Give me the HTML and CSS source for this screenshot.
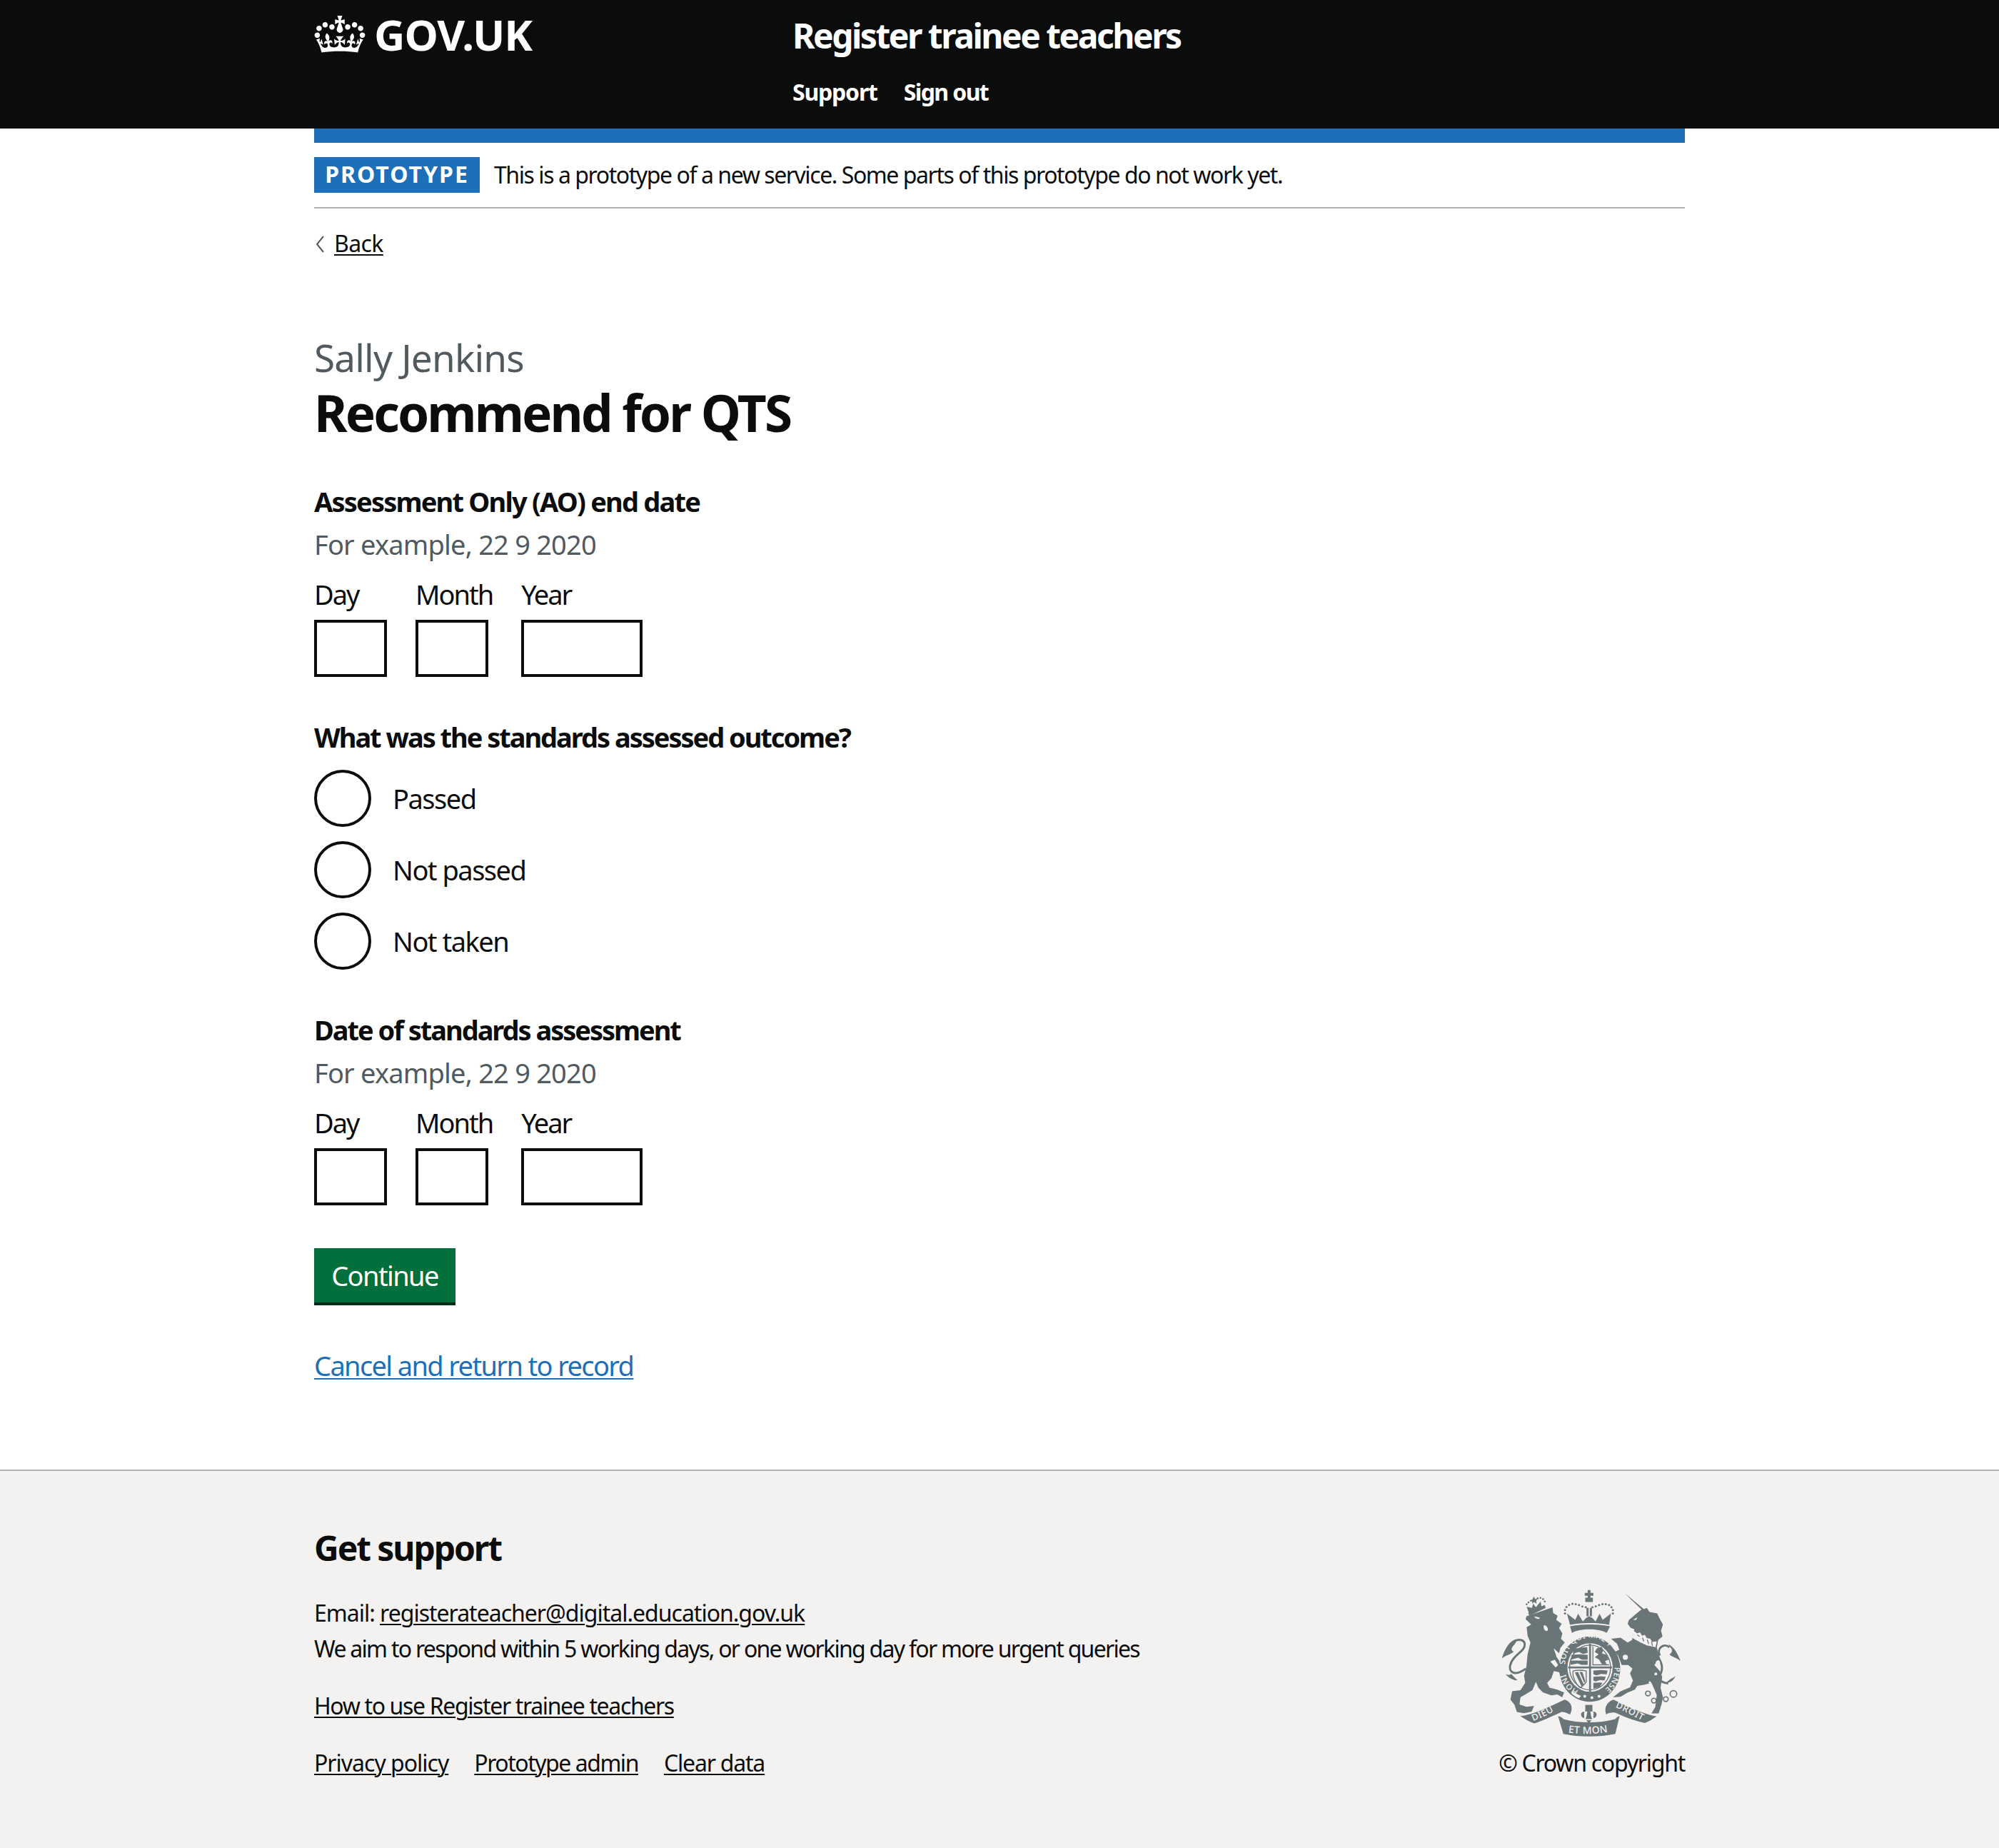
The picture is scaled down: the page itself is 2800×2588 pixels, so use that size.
FILE: index.html
```html
<!DOCTYPE html>
<html lang="en">
<head>
<meta charset="utf-8">
<title>Recommend for QTS - Register trainee teachers</title>
<link rel="stylesheet" href="styles.css">
</head>
<body>
<header class="header">
  <div class="container header-inner">
    <a class="logo" href="#">
      <svg class="crown" viewBox="0 0 132 97" aria-hidden="true"><path fill="currentColor" fill-rule="evenodd" d="M25 30.2c3.5 1.5 7.7-.2 9.1-3.7 1.5-3.6-.2-7.8-3.9-9.2-3.6-1.4-7.6.3-9.1 3.9-1.4 3.5.3 7.5 3.9 9zM9 39.5c3.6 1.5 7.8-.2 9.2-3.7 1.5-3.6-.2-7.8-3.9-9.1-3.6-1.5-7.6.2-9.1 3.8-1.4 3.5.3 7.5 3.8 9zM4.4 57.2c3.5 1.5 7.7-.2 9.1-3.8 1.5-3.6-.2-7.7-3.9-9.1-3.5-1.5-7.6.3-9.1 3.8-1.4 3.5.3 7.6 3.9 9.1zm38.3-21.4c3.5 1.5 7.7-.2 9.1-3.8 1.5-3.6-.2-7.7-3.9-9.1-3.6-1.5-7.6.3-9.1 3.8-1.3 3.6.4 7.7 3.9 9.1zm64.4-5.6c-3.6 1.5-7.8-.2-9.1-3.7-1.5-3.6.2-7.8 3.8-9.2 3.6-1.4 7.7.3 9.2 3.9 1.3 3.5-.4 7.5-3.9 9zm15.9 9.3c-3.6 1.5-7.7-.2-9.1-3.7-1.5-3.6.2-7.8 3.7-9.1 3.6-1.5 7.7.2 9.2 3.8 1.5 3.5-.3 7.5-3.8 9zm4.7 17.7c-3.6 1.5-7.8-.2-9.2-3.8-1.5-3.6.2-7.7 3.9-9.1 3.6-1.5 7.7.3 9.2 3.8 1.3 3.5-.4 7.6-3.9 9.1zM89.3 35.8c-3.6 1.5-7.8-.2-9.2-3.8-1.4-3.6.2-7.7 3.9-9.1 3.6-1.5 7.7.3 9.2 3.8 1.4 3.6-.3 7.7-3.9 9.1zM69.7 17.7l8.9 4.7V9.3l-8.9 2.8c-.2-.3-.5-.6-.9-.9L72.4 0H59.6l3.6 11.2c-.3.3-.6.5-.9.9l-8.8-2.8v13.1l8.8-4.7c.3.3.6.7.9.9l-5 15.4v.1c-.2.8-.4 1.6-.4 2.4 0 4.1 3.1 7.5 7 8.1h.2c.3 0 .7.1 1 .1.4 0 .7 0 1-.1h.2c4-.6 7.1-4.1 7.1-8.1 0-.8-.1-1.7-.4-2.4V34l-5.1-15.4c.4-.2.7-.6 1-.9zM66 92.8c16.9 0 32.8 1.1 47.1 3.2 4-16.9 8.9-26.7 14-33.5l-9.6-3.4c1 4.9 1.1 7.2 0 10.2-1.5-1.4-3-4.3-4.2-8.7L108.6 76c2.8-2 5-3.2 7.5-3.3-4.4 9.4-10 11.9-13.6 11.2-4.3-.8-6.3-4.6-5.6-7.9 1-4.7 5.7-5.9 8-.5 4.3-8.7-3-11.4-7.6-8.8 7.1-7.2 7.9-13.5 2.1-21.1-8 6.1-8.1 12.3-4.5 20.8-4.7-5.4-12.1-2.5-9.5 6.2 3.4-5.2 7.9-2 7.2 3.1-.6 4.3-6.4 7.8-13.5 7.2-10.3-.9-10.9-8-11.2-13.8 2.5-.5 7.1 1.8 11 7.3L80.2 60c-4.1 4.4-8 5.3-12.3 5.4 1.4-4.4 8-11.6 8-11.6H55.5s6.4 7.2 7.9 11.6c-4.2-.1-8-1-12.3-5.4l1.4 16.4c3.9-5.5 8.5-7.7 10.9-7.3-.3 5.8-.9 12.8-11.1 13.8-7.2.6-12.9-2.9-13.5-7.2-.7-5 3.8-8.3 7.1-3.1 2.7-8.7-4.6-11.6-9.4-6.2 3.7-8.5 3.6-14.7-4.6-20.8-5.8 7.6-5 13.9 2.2 21.1-4.7-2.6-11.9.1-7.7 8.8 2.3-5.5 7.1-4.2 8.1.5.7 3.3-1.3 7.1-5.7 7.9-3.5.7-9-1.8-13.5-11.2 2.5.1 4.7 1.3 7.5 3.3l-4.7-15.4c-1.2 4.4-2.7 7.2-4.3 8.7-1.1-3-.9-5.3 0-10.2l-9.5 3.4c5 6.9 9.9 16.7 14 33.5 14.8-2.1 30.8-3.2 47.7-3.2z"/></svg>
      <span class="logotype">GOV.UK</span>
    </a>
    <div class="service">
      <a class="service-name" href="#">Register trainee teachers</a>
      <nav class="service-nav">
        <a href="#">Support</a>
        <a class="nav-signout" href="#">Sign out</a>
      </nav>
    </div>
  </div>
</header>

<div class="container">
  <div class="bluebar"></div>
  <div class="phase">
    <strong class="tag">PROTOTYPE</strong>
    <span class="phase-text">This is a prototype of a new service. Some parts of this prototype do not work yet.</span>
  </div>
  <a class="back" href="#"><svg class="back-chev" viewBox="0 0 16 26" aria-hidden="true"><path d="M13 2 L4 13 L13 24" fill="none" stroke="#505a5f" stroke-width="2"/></svg><span class="back-label">Back</span></a>

  <main class="main">
    <span class="caption">Sally Jenkins</span>
    <h1 class="title">Recommend for QTS</h1>

    <fieldset class="group group-first">
      <legend class="legend legend-a">Assessment Only (AO) end date</legend>
      <div class="hint">For example, 22 9 2020</div>
      <div class="date">
        <div class="date-item"><label class="date-label">Day</label><input class="input input-2" type="text"></div>
        <div class="date-item"><label class="date-label">Month</label><input class="input input-2" type="text"></div>
        <div class="date-item"><label class="date-label">Year</label><input class="input input-4" type="text"></div>
      </div>
    </fieldset>

    <fieldset class="group group-next">
      <legend class="legend legend-b">What was the standards assessed outcome?</legend>
      <div class="radios">
        <label class="radio"><input class="radio-input" type="radio" name="o"><span class="radio-label">Passed</span></label>
        <label class="radio"><input class="radio-input" type="radio" name="o"><span class="radio-label">Not passed</span></label>
        <label class="radio"><input class="radio-input" type="radio" name="o"><span class="radio-label">Not taken</span></label>
      </div>
    </fieldset>

    <fieldset class="group group-next">
      <legend class="legend legend-b">Date of standards assessment</legend>
      <div class="hint">For example, 22 9 2020</div>
      <div class="date">
        <div class="date-item"><label class="date-label">Day</label><input class="input input-2" type="text"></div>
        <div class="date-item"><label class="date-label">Month</label><input class="input input-2" type="text"></div>
        <div class="date-item"><label class="date-label">Year</label><input class="input input-4" type="text"></div>
      </div>
    </fieldset>

    <button class="button" type="button">Continue</button>
    <p class="cancel"><a href="#">Cancel and return to record</a></p>
  </main>
</div>

<footer class="footer">
  <div class="container footer-inner">
    <div class="footer-meta">
      <h2 class="footer-title">Get support</h2>
      <p class="footer-line footer-email">Email: <a href="#">registerateacher@digital.education.gov.uk</a></p>
      <p class="footer-line footer-aim">We aim to respond within 5 working days, or one working day for more urgent queries</p>
      <p class="footer-how"><a href="#">How to use Register trainee teachers</a></p>
      <ul class="footer-links">
        <li class="fl-privacy"><a href="#">Privacy policy</a></li>
        <li class="fl-admin"><a href="#">Prototype admin</a></li>
        <li class="fl-clear"><a href="#">Clear data</a></li>
      </ul>
    </div>
    <div class="footer-copy">
      <svg class="arms" viewBox="70 75 755 620" aria-hidden="true">
        <defs>
          <path id="garterTop" d="M338 392 A104 108 0 0 1 546 384"/>
          <path id="garterRight" d="M544 404 A102 108 0 0 1 500 500"/>
          <path id="garterLeft" d="M394 502 A104 108 0 0 1 339 432"/>
          <path id="ribLeft" d="M203 630 C245 614 285 594 318 572"/>
          <path id="ribMid" d="M350 678 C400 686 470 686 528 674"/>
          <path id="ribRight" d="M548 572 C590 590 630 612 668 632"/>
        </defs>
        <g class="arms-ink">
          <!-- lion -->
          <path d="M175 190 L210 178 L250 165 L285 153 L287 176 L306 188 L300 205 L323 222 L312 240 L326 262 L320 285 L336 300 L318 322 L312 345 L290 325 L302 362 L325 395 L338 425 L320 440 L312 425 L290 420 L280 450 L262 470 L272 490 L305 498 L333 510 L325 530 L305 518 L280 522 L245 510 L225 490 L215 465 L200 500 L150 530 L146 560 L175 570 L207 566 L197 590 L165 597 L135 592 L125 562 L108 540 L115 505 L150 500 L170 470 L165 440 L175 400 L180 350 L192 300 L180 272 L176 236 L195 225 L172 203 Z"/>
          <path class="arms-line" d="M172 410 C125 445 92 425 112 382 C130 345 168 338 168 308 C168 288 140 284 125 295"/>
          <path d="M132 287 C105 292 85 325 72 367 C92 352 112 350 122 338 C112 335 108 325 122 312 C128 305 135 296 132 287Z"/>
          <path d="M112 432 C104 438 96 436 88 433 C100 448 122 462 138 458 C128 450 120 442 112 432Z"/>
          <!-- lion crown -->
          <path d="M182 176 L252 142 L256 155 L188 188 Z"/>
          <path d="M184 172 L176 150 L198 155 L203 138 L215 152 L235 128 L238 148 L250 145 L248 156 L190 180 Z"/>
          <path d="M200 120 L206 107 L212 118 L222 116 L216 126 L218 138 L208 130 L199 136 L199 126 L190 124 Z"/>
          <circle cx="176" cy="140" r="4"/><circle cx="184" cy="132" r="4"/><circle cx="194" cy="125" r="4"/><circle cx="222" cy="115" r="4"/><circle cx="234" cy="113" r="4"/><circle cx="245" cy="118" r="4"/><circle cx="252" cy="128" r="4"/>
          <!-- unicorn -->
          <path d="M588 94 L668 160 L680 155 L692 172 L724 178 L734 200 L748 225 L740 250 L746 275 L728 290 L722 322 L735 365 L712 395 L735 420 L745 445 L738 490 L748 530 L742 560 L730 598 L700 598 L716 570 L722 520 L700 470 L668 478 L640 482 L630 498 L600 510 L570 528 L538 530 L570 505 L610 488 L622 460 L610 430 L620 410 L602 395 L575 395 L560 355 L545 340 L565 330 L555 305 L530 285 L570 280 L600 300 L618 290 L628 245 L612 238 L600 222 L605 206 L640 176 L658 162 Z"/>
          <path class="arms-line" d="M728 362 C742 385 750 405 738 432 C726 455 738 468 770 472"/>
          <path class="arms-line" d="M735 355 C720 325 752 300 775 320"/>
          <path d="M770 308 C795 318 808 345 822 378 C802 362 786 362 775 350 C786 344 790 332 780 322Z"/>
          <path d="M782 452 C790 450 794 445 800 442 C792 462 775 470 760 470 Z"/>
          <!-- royal crown -->
          <path d="M358 232 C400 222 480 222 526 232 L512 260 C478 240 400 240 366 260 Z"/>
          <path d="M358 226 L345 178 L380 205 L392 180 L412 212 L425 198 L438 190 L452 198 L465 212 L482 180 L495 205 L530 178 L522 226 C480 216 400 216 358 226Z"/>
          <path d="M427 155 H436 V190 H427Z M441 155 H450 V190 H441Z"/>
          <path d="M420 92 H432 V80 H444 V92 H456 V104 H444 V112 H454 V130 H422 V112 H432 V104 H420Z"/>
          <circle cx="337" cy="178" r="4.5"/><circle cx="337" cy="164" r="4.5"/><circle cx="343" cy="151" r="4.5"/><circle cx="354" cy="142" r="4.5"/><circle cx="368" cy="138" r="4.5"/><circle cx="382" cy="139" r="4.5"/><circle cx="396" cy="143" r="4.5"/><circle cx="410" cy="149" r="4.5"/><circle cx="424" cy="152" r="4.5"/><circle cx="452" cy="152" r="4.5"/><circle cx="466" cy="148" r="4.5"/><circle cx="480" cy="143" r="4.5"/><circle cx="494" cy="139" r="4.5"/><circle cx="508" cy="139" r="4.5"/><circle cx="522" cy="143" r="4.5"/><circle cx="532" cy="152" r="4.5"/><circle cx="538" cy="164" r="4.5"/><circle cx="538" cy="178" r="4.5"/>
          <!-- garter -->
          <ellipse cx="441" cy="412" rx="128" ry="137"/>
        </g>
        <g class="arms-cut">
          <ellipse cx="442" cy="405" rx="95" ry="102"/>
          <path d="M364 262 C400 244 478 244 512 262 C490 279 390 279 364 262Z"/>
          <circle cx="420" cy="526" r="6"/><circle cx="450" cy="532" r="6"/><circle cx="480" cy="526" r="6"/>
          <path d="M368 505 C378 512 392 520 404 524 L396 534 C384 530 372 522 364 514Z"/>
          <!-- lion face and mane -->
          <path d="M208 190 L232 196 L226 202 L212 198Z"/>
          <path d="M248 228 C258 226 268 240 264 250 C256 256 244 246 248 228Z"/>
          <path d="M290 326 L322 366 L316 370 L296 342Z"/>
          <path d="M275 380 L294 372 L308 395 L298 405Z"/>
          <!-- unicorn collar, eye, spots -->
          <path d="M625 252 L640 262 L652 258 L660 272 L672 268 L680 282 L695 285 L702 298 L722 295 L717 320 L680 312 L650 298 L620 282Z"/>
          <circle cx="604" cy="280" r="10"/><circle cx="590" cy="362" r="11"/>
          <circle cx="727" cy="385" r="9"/><circle cx="718" cy="432" r="6"/><circle cx="693" cy="468" r="5"/>
          <path d="M622 205 L640 195 L636 205Z"/>
        </g>
        <g class="arms-ink">
          <path class="arms-thin" d="M640 268 L650 275 M662 280 L668 296 M682 288 L688 306 M700 298 L704 314"/>
          <ellipse class="arms-thin" cx="442" cy="405" rx="86" ry="94"/>
          <rect x="438" y="305" width="8" height="202"/>
          <rect x="350" y="401" width="184" height="8"/>
          <!-- quarters -->
          <path d="M372 328 L398 322 L430 320 L432 344 L412 348 L396 340 L370 346 Z"/>
          <path d="M364 352 L400 350 L432 352 L432 372 L408 372 L392 364 L362 372 Z"/>
          <path d="M360 376 L400 376 L432 376 L432 394 L406 394 L390 388 L360 394 Z"/>
          <path d="M470 325 L490 318 L498 332 L492 346 L512 352 L520 372 L505 378 L512 392 L492 392 L480 372 L462 362 L478 350 L462 340 Z"/>
          <path class="arms-thin" d="M454 316 V394 H522"/>
          <path class="arms-thin" d="M370 420 C395 414 418 418 426 420 V466 C418 476 408 488 400 490 C380 472 368 445 370 420Z"/>
          <path d="M378 426 L392 424 L416 478 L406 484Z M398 424 L410 424 L422 462 L418 470Z"/>
          <path d="M456 418 L488 416 L516 418 L512 434 L488 432 L470 438 L456 434 Z"/>
          <path d="M456 444 L488 442 L508 444 L502 460 L484 458 L466 464 L456 460 Z"/>
          <path d="M456 470 L484 468 L494 470 L482 488 L456 494 Z"/>
        </g>
        <text class="arms-text arms-text-sm"><textPath href="#garterTop">SOIT QUI MAL Y</textPath></text>
        <text class="arms-text arms-text-sm"><textPath href="#garterRight">PENSE</textPath></text>
        <text class="arms-text arms-text-sm"><textPath href="#garterLeft">HONI</textPath></text>
        <g class="arms-ink">
          <!-- motto ribbon -->
          <path d="M150 610 C210 600 270 570 335 540 C365 548 372 578 358 602 C345 596 330 590 322 592 C280 612 240 630 208 640 C190 635 170 622 150 610Z"/>
          <path d="M722 610 C665 600 590 565 540 540 C510 550 500 580 510 602 C520 595 535 592 548 595 C590 615 640 632 672 638 C690 632 705 622 722 610Z"/>
          <path d="M308 610 C322 612 326 616 330 622 C395 640 480 640 548 622 C552 616 556 612 566 608 L548 684 C480 698 395 698 330 684Z"/>
          <!-- fleur de lis -->
          <path d="M422 562 H452 V590 H422Z"/>
          <path d="M437 578 C426 590 432 606 422 622 L452 622 C442 606 448 590 437 578Z"/>
          <path d="M420 592 C402 586 398 612 416 618 C422 610 412 600 420 592Z"/>
          <path d="M454 592 C472 586 476 612 458 618 C452 610 462 600 454 592Z"/>
          <path d="M426 626 H448 L437 640Z"/>
        </g>
        <text class="arms-text"><textPath href="#ribLeft">DIEU</textPath></text>
        <text class="arms-text arms-text-lg"><textPath href="#ribMid">ET MON</textPath></text>
        <text class="arms-text"><textPath href="#ribRight">DROIT</textPath></text>
        <g class="arms-rings">
          <circle cx="685" cy="514" r="10"/><circle cx="710" cy="544" r="10"/><circle cx="760" cy="538" r="10"/><circle cx="792" cy="516" r="14"/>
        </g>
      </svg>
      <a class="copyright" href="#">© Crown copyright</a>
    </div>
  </div>
</footer>
</body>
</html>
```

FILE: styles.css
```css
* { box-sizing: border-box; }
html, body { margin: 0; padding: 0; }
body {
  font-family: "Noto Sans", "Liberation Sans", sans-serif;
  color: #0b0c0c;
  background: #fff;
  font-size: 38px;
  line-height: 50px;
}
a { color: inherit; text-decoration: underline; text-decoration-thickness: 2px; text-underline-offset: 3px; }
.container { width: 1920px; margin: 0 auto; }

.header { background: #0b0c0c; color: #fff; height: 180px; }
.header-inner { display: flex; padding-top: 20px; }
.header a { color: #fff; text-decoration: none; }
.logo { display: flex; width: 670px; height: 60px; align-items: flex-start; gap: 12px; }
.crown { width: 72px; height: 52px; display: block; margin-top: 2px; }
.logotype { font-size: 60px; line-height: 60px; font-weight: 700; letter-spacing: -1px; margin-top: -2px; }
.service-name { display: block; font-size: 48px; line-height: 60px; font-weight: 700; letter-spacing: -2.5px; }
.service-nav { display: flex; gap: 37px; font-size: 32px; line-height: 40px; font-weight: 700; margin-top: 29px; letter-spacing: -1.2px; }
.nav-signout { letter-spacing: -1.6px; }

.bluebar { height: 20px; background: #1d70b8; }
.phase { display: flex; align-items: center; gap: 20px; padding: 20px 0; border-bottom: 2px solid #b1b4b6; height: 92px; }
.tag { display: block; width: 232px; height: 50px; background: #1d70b8; color: #fff; font-size: 32px; line-height: 48px; font-weight: 700; letter-spacing: 2px; text-align: center; }
.phase-text { font-size: 32px; line-height: 40px; letter-spacing: -1.43px; }

.back { display: flex; align-items: center; margin-top: 29px; height: 40px; font-size: 32px; line-height: 40px; text-decoration: none; }
.back-chev { width: 16px; height: 26px; margin-right: 12px; margin-top: 1px; }
.back-label { text-decoration: underline; text-decoration-thickness: 2px; text-underline-offset: 3px; letter-spacing: -0.6px; }

.main { padding-top: 110px; }
.caption { display: block; font-size: 53px; line-height: 60px; color: #505a5f; letter-spacing: -0.8px; }
.title { margin: 7px 0 0; font-size: 71px; line-height: 80px; font-weight: 700; letter-spacing: -2.9px; }

.group { border: 0; margin: 0; padding: 0; min-width: 0; display: block; }
.group-first { margin-top: 59px; }
.group-next { margin-top: 59px; }
.legend { display: block; padding: 0; font-weight: 700; line-height: 50px; }
.legend-a { letter-spacing: -1.8px; }
.legend-b { letter-spacing: -2.03px; }
.hint { color: #505a5f; margin-top: 10px; letter-spacing: -0.8px; }
.date { display: flex; gap: 40px; margin-top: 20px; }
.date-item { display: flex; flex-direction: column; }
.date-label { display: block; height: 61px; line-height: 50px; letter-spacing: -2px; }
.input { display: block; height: 80px; border: 4px solid #0b0c0c; border-radius: 0; background: #fff; padding: 0; margin: 0; }
.input-2 { width: 102px; }
.input-4 { width: 170px; }

.radios { margin-top: 21px; display: flex; flex-direction: column; gap: 20px; }
.radio { display: flex; align-items: center; height: 80px; gap: 30px; }
.radio-input { appearance: none; -webkit-appearance: none; width: 80px; height: 80px; border: 4px solid #0b0c0c; border-radius: 50%; margin: 0; background: #fff; flex: none; }
.radio-label { letter-spacing: -1.5px; }

.button { display: block; margin: 60px 0 0; width: 198px; height: 80px; padding: 0 0 5px; border: 0; border-radius: 0; background: #00703c; color: #fff; font: inherit; box-shadow: inset 0 -4px 0 #002d18; letter-spacing: -1.6px; }
.cancel { margin: 59px 0 0; color: #1d70b8; letter-spacing: -1.63px; }

.footer { margin-top: 121px; background: #f3f2f1; border-top: 2px solid #b1b4b6; height: 530px; }
.footer-inner { display: flex; justify-content: space-between; }
.footer-meta { font-size: 32px; line-height: 50px; }
.footer-title { margin: 78px 0 0; font-size: 48px; line-height: 60px; font-weight: 700; letter-spacing: -2.1px; }
.footer-line { margin: 0; }
.footer-email { margin-top: 36px; letter-spacing: -1px; }
.footer-aim { letter-spacing: -1.72px; }
.footer-how { margin: 30px 0 0; letter-spacing: -1.36px; }
.footer-links { list-style: none; margin: 30px 0 0; padding: 0; display: flex; gap: 36px; }
.fl-privacy { letter-spacing: -1px; }
.fl-admin { letter-spacing: -1.47px; }
.fl-clear { letter-spacing: -1.2px; }
.footer-copy { display: flex; flex-direction: column; align-items: flex-end; padding-top: 165px; font-size: 32px; line-height: 50px; }
.arms { display: block; width: 252px; height: 207px; margin-right: 5px; margin-bottom: 12px; }
.copyright { text-decoration: none; letter-spacing: -1.26px; }

.arms-ink { fill: #6a7578; }
.arms-cut { fill: #f3f2f1; }
.arms-line { fill: none; stroke: #6a7578; stroke-width: 9; }
.arms-thin { fill: none; stroke: #6a7578; stroke-width: 4; }
.arms-rings { fill: none; stroke: #6a7578; stroke-width: 5; }
.arms-text { fill: #f3f2f1; font-family: "Noto Sans", sans-serif; font-size: 38px; font-weight: 500; letter-spacing: 2px; }
.arms-text-sm { font-size: 33px; letter-spacing: 1px; }
.arms-text-lg { font-size: 42px; letter-spacing: 1px; }
```
